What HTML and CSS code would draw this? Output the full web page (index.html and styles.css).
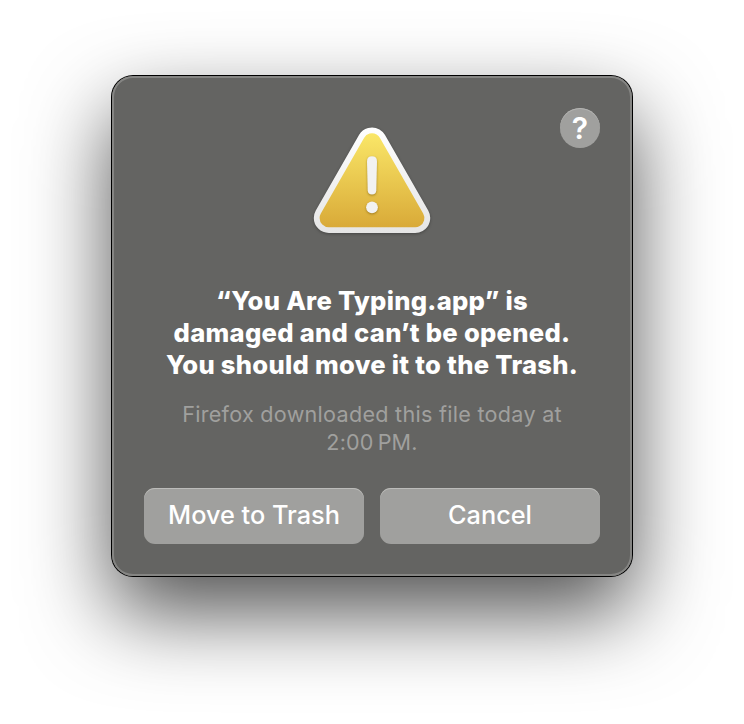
FILE: index.html
```html
<!DOCTYPE html>
<html lang="en">
<head>
<meta charset="utf-8">
<title>Alert</title>
<link rel="stylesheet" href="styles.css">
</head>
<body>
<main class="alert" role="alertdialog">
  <button class="help" aria-label="Help">?</button>
  <svg class="icon" viewBox="300 115 144 130" width="144" height="130" aria-hidden="true">
    <defs>
      <linearGradient id="rim" gradientUnits="userSpaceOnUse" x1="0" y1="127" x2="0" y2="233">
        <stop offset="0" stop-color="#ffffff"/>
        <stop offset="1" stop-color="#e5e5e5"/>
      </linearGradient>
      <linearGradient id="face" gradientUnits="userSpaceOnUse" x1="0" y1="133" x2="0" y2="227">
        <stop offset="0" stop-color="#fae768"/>
        <stop offset="1" stop-color="#d9aa38"/>
      </linearGradient>
    </defs>
    <path class="rim" d="M372 142.5 L415.2 218 H328.8Z"/>
    <path class="face" d="M372 142.5 L415.2 218 H328.8Z"/>
    <g class="mark">
      <path d="M367 161.200 Q367 156.200 372 156.200 T377 161.200 L376.300 190.500 Q376 194.500 372 194.500 T367.700 190.500Z"/>
      <circle cx="372" cy="207.300" r="5.900"/>
    </g>
  </svg>
  <h1 class="title">
    <span class="line">“You Are Typing.app” is</span>
    <span class="line">damaged and can’t be opened.</span>
    <span class="line">You should move it to the Trash.</span>
  </h1>
  <p class="detail">
    <span class="line">Firefox downloaded this file today at</span>
    <span class="line time">2:00&#8239;PM.</span>
  </p>
  <div class="actions">
    <button class="action">Move to Trash</button>
    <button class="action">Cancel</button>
  </div>
</main>
</body>
</html>
```
FILE: styles.css
```css
* { box-sizing: border-box; }

body {
  margin: 0;
  height: 724px;
  padding-top: 76px;
  background: #fff;
  overflow: hidden;
  font-family: Inter, "Liberation Sans", sans-serif;
  color: #fff;
}

.alert {
  position: relative;
  display: flex;
  flex-direction: column;
  align-items: center;
  width: 520px;
  height: 500px;
  margin: 0 auto;
  padding: 39px 32px 32px;
  border-radius: 21px;
  background: #646462;
  box-shadow:
    inset 0 0 0 2px #858583,
    0 0 0 1px #000,
    0 36px 84px rgba(0, 0, 0, 0.69);
}

button {
  border: 0;
  padding: 0;
  font-family: inherit;
  color: #fff;
  background: #a0a09e;
}

.help {
  position: absolute;
  top: 32px;
  right: 32px;
  width: 40px;
  height: 40px;
  border-radius: 50%;
  font-size: 30px;
  line-height: 40px;
  font-weight: 600;
  box-shadow: inset 0 1px 0 #b4b4b2;
}

.icon { display: block; flex: none; }

.rim {
  fill: url(#rim);
  stroke: url(#rim);
  stroke-width: 30;
  stroke-linejoin: round;
  filter: drop-shadow(0 1px 1.5px rgba(0, 0, 0, 0.3));
}

.face {
  fill: url(#face);
  stroke: url(#face);
  stroke-width: 18.4;
  stroke-linejoin: round;
}

.mark {
  fill: #f2f2f2;
  filter: drop-shadow(0 1px 0.8px rgba(100, 70, 0, 0.5));
}

.line { display: block; white-space: nowrap; }

.title {
  margin: 40px 0 0;
  font-size: 25.6px;
  line-height: 32px;
  font-weight: 800;
  letter-spacing: 0.28px;
  text-align: center;
}

.detail {
  margin: 19px 0 0;
  font-size: 21.6px;
  line-height: 28px;
  letter-spacing: 0.27px;
  text-align: center;
  color: #a0a09e;
}

.time { letter-spacing: 0.15px; }

.actions {
  display: flex;
  gap: 16px;
  width: 100%;
  margin-top: auto;
}

.action {
  flex: 1;
  height: 56px;
  border-radius: 11px;
  padding-bottom: 4px;
  font-size: 25.3px;
  font-weight: 500;
  box-shadow: inset 0 1px 0 #bcbcba;
}
```
